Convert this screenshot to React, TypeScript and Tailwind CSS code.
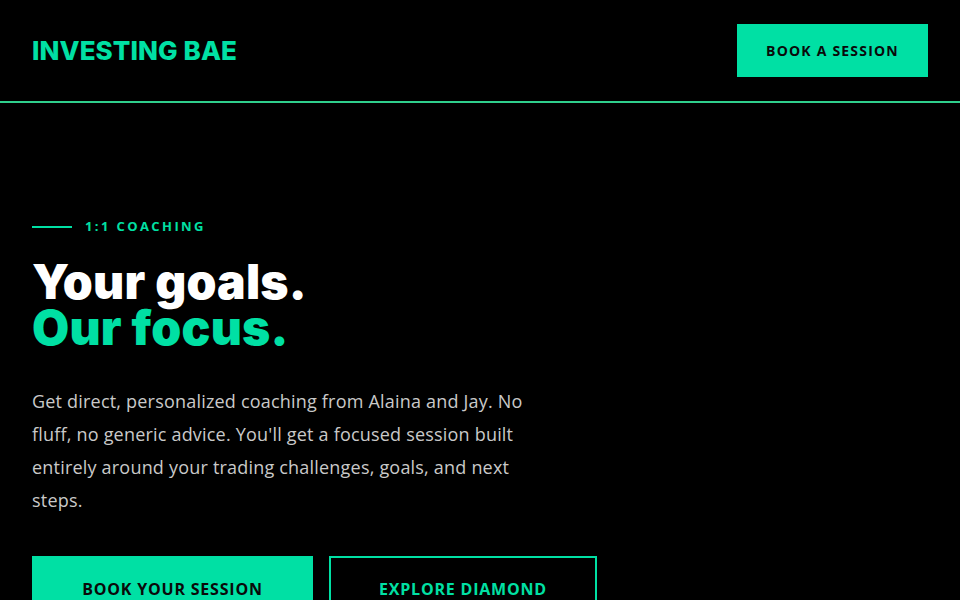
export default function App() {
  return (
    <div className="min-h-screen w-full bg-black overflow-hidden" style={{ fontFamily: '"Open Sans", "Liberation Sans", sans-serif' }}>
      <header className="h-[103px] flex items-center justify-between px-8 border-b-2 border-[#2fcf8c]">
        <div className="text-[26px] font-extrabold tracking-[0.1px] text-[#00e0a4] leading-none" style={{ fontFamily: 'Inter, "Liberation Sans", sans-serif' }}>
          INVESTING BAE
        </div>
        <button className="w-[191px] h-[53px] bg-[#00e0a4] text-[14px] font-bold tracking-[1.2px] text-[#0a0a0a]">
          BOOK A SESSION
        </button>
      </header>
      <main className="px-8 pt-[114px]">
        <div className="flex items-center gap-[13px]">
          <div className="w-10 h-[2px] bg-[#00e0a4]" />
          <span className="text-[13px] font-bold tracking-[2.4px] text-[#00e0a4]">1:1 COACHING</span>
        </div>
        <h1 className="mt-[22px] text-[48px] font-black leading-[46px] tracking-[0.2px]" style={{ fontFamily: 'Inter, "Liberation Sans", sans-serif' }}>
          <span className="block text-white">Your goals.</span>
          <span className="block text-[#00e0a4]">Our focus.</span>
        </h1>
        <p className="mt-[34px] max-w-[510px] text-[18px] leading-[33px] tracking-[0.2px] text-[#c9c9c9]">
          Get direct, personalized coaching from Alaina and Jay. No fluff, no generic advice. You'll get a focused session built entirely around your trading challenges, goals, and next steps.
        </p>
        <div className="mt-[39px] flex gap-4">
          <button className="w-[281px] h-[66px] bg-[#00e0a4] text-[16px] font-bold tracking-[0.8px] text-[#0a0a0a]">
            BOOK YOUR SESSION
          </button>
          <button className="w-[268px] h-[66px] border-2 border-[#00e0a4] text-[16px] font-bold tracking-[0.8px] text-[#00e0a4]">
            EXPLORE DIAMOND
          </button>
        </div>
      </main>
    </div>
  );
}
